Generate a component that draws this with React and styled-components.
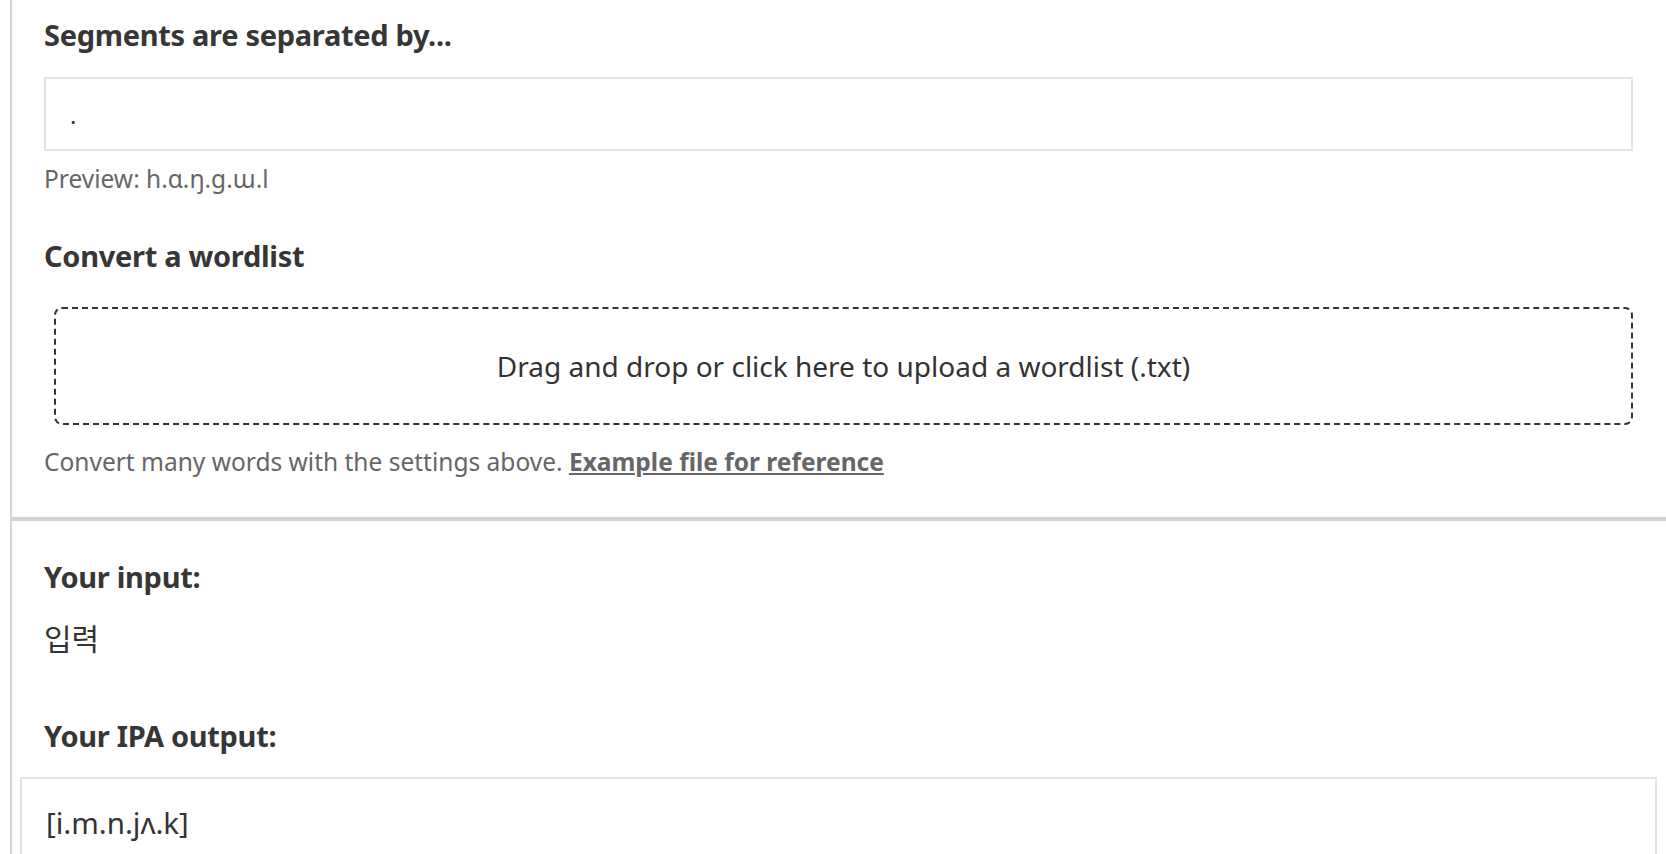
import styled, { createGlobalStyle } from "styled-components";

const GlobalStyle = createGlobalStyle`
  html, body {
    margin: 0;
    padding: 0;
    background: #ffffff;
  }
  body {
    font-family: "Noto Sans", "Noto Sans CJK KR", sans-serif;
    color: #333333;
    overflow: hidden;
  }
`;

const Panel = styled.div`
  margin-left: 10px;
  border-left: 2px solid #d6d6d6;
  min-height: 854px;
`;

const Section = styled.section`
  display: flex;
  flex-direction: column;
  padding: ${(p) => p.$top}px 33px 0 32px;
`;

const Heading = styled.h3`
  margin: ${(p) => p.$mt || 0}px 0 0 0;
  font-size: 29px;
  line-height: 34px;
  font-weight: 700;
  letter-spacing: -0.3px;
  color: #363636;
`;

const TextInput = styled.input`
  margin-top: 25px;
  height: 74px;
  box-sizing: border-box;
  width: 100%;
  border: 2px solid #e0e3e7;
  padding: 0 24px;
  font-family: inherit;
  font-size: 24px;
  color: #333333;
  outline: none;
`;

const Hint = styled.p`
  margin: ${(p) => p.$mt || 0}px 0 0 0;
  font-size: 24.5px;
  line-height: 29px;
  color: #666666;

  a {
    color: #666666;
    font-weight: 700;
    text-decoration: underline;
  }
`;

const DropZone = styled.div`
  margin: 34px 0 0 10px;
  height: 118px;
  box-sizing: border-box;
  border: 2px dashed #333333;
  border-radius: 8px;
  display: flex;
  align-items: center;
  justify-content: center;
  font-size: 28px;
  color: #333333;
  cursor: pointer;
`;

const Divider = styled.hr`
  margin: 41px 0 0 0;
  border: none;
  border-top: 4px solid #d3d3d3;
`;

const Value = styled.div`
  margin-top: 27px;
  font-size: 30px;
  line-height: 35px;
  color: #333333;
`;

const OutputBox = styled.div`
  margin: 24px -24px 0 -24px;
  height: 100px;
  box-sizing: border-box;
  border: 2px solid #e0e3e7;
  border-bottom: none;
  padding: 26px 24px 0 24px;
  font-size: 29.5px;
  line-height: 36px;
  color: #333333;
`;

export default function App() {
  return (
    <>
      <GlobalStyle />
      <Panel>
        <Section $top={18}>
          <Heading>Segments are separated by...</Heading>
          <TextInput defaultValue="." />
          <Hint $mt={13}>Preview: h.ɑ.ŋ.ɡ.ɯ.l</Hint>
          <Heading $mt={46}>Convert a wordlist</Heading>
          <DropZone>Drag and drop or click here to upload a wordlist (.txt)</DropZone>
          <Hint $mt={22}>
            Convert many words with the settings above.{" "}
            <a href="#">Example file for reference</a>
          </Hint>
        </Section>
        <Divider />
        <Section $top={39}>
          <Heading>Your input:</Heading>
          <Value>입력</Value>
          <Heading $mt={63}>Your IPA output:</Heading>
          <OutputBox>[i.m.n.jʌ.k]</OutputBox>
        </Section>
      </Panel>
    </>
  );
}
